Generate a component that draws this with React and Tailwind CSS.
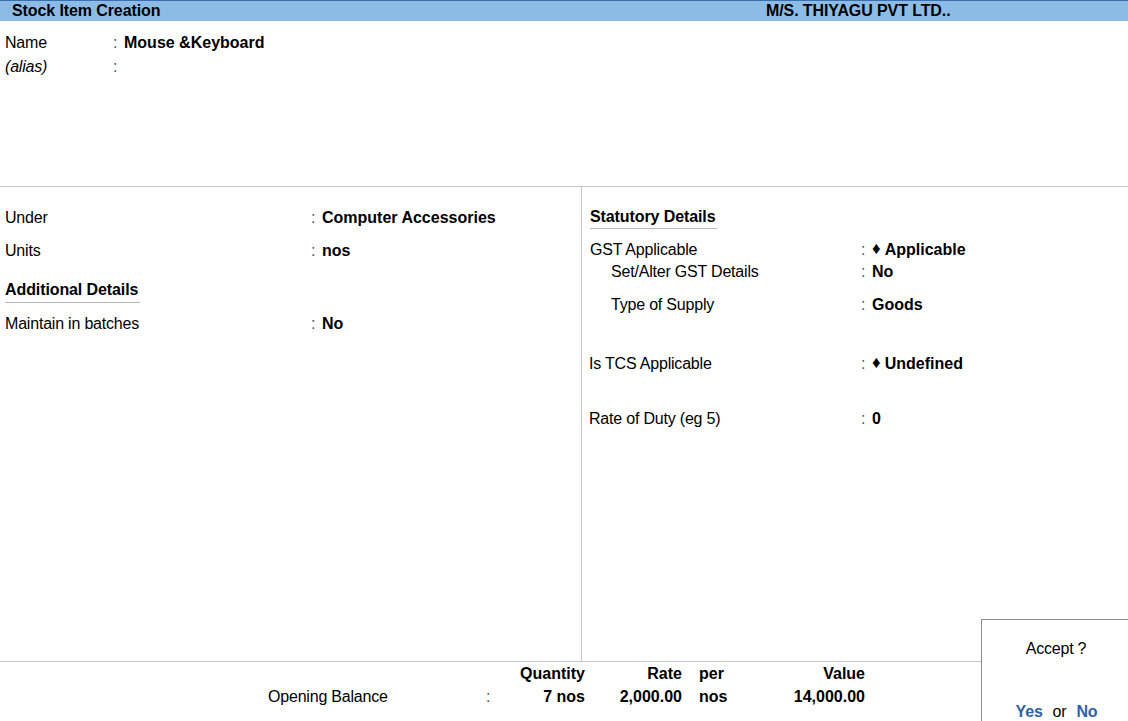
import React from "react";

const Row = ({ label, value, labelW, className = "", labelClass = "" }) => (
  <div className={`flex items-center h-[24px] ${className}`}>
    <div className={`shrink-0 ${labelClass}`} style={{ width: labelW }}>
      {label}
    </div>
    <span className="text-gray-600 w-[11px]">:</span>
    <span className="font-bold tracking-normal">{value}</span>
  </div>
);

const Diamond = () => <span className="text-[17px] mr-[4px] relative -top-[1px]">♦</span>;

const App = () => {
  return (
    <div
      className="relative w-[1128px] h-[721px] overflow-hidden bg-white text-black text-[16px] tracking-[-0.2px]"
      style={{ fontFamily: '"Liberation Sans", Arial, sans-serif' }}
    >
      {/* title bar */}
      <div className="flex items-center h-[21px] bg-[#8cbce5] border-t border-[#3b6fae] font-bold tracking-[-0.1px]">
        <div className="pl-[12px] w-[766px]">Stock Item Creation</div>
        <div>M/S. THIYAGU PVT LTD..</div>
      </div>

      {/* name block */}
      <div className="h-[165px] pt-[10px] pl-[5px]">
        <div className="flex items-center h-[24px]">
          <div className="w-[108px]">Name</div>
          <span className="text-gray-600 w-[11px]">:</span>
          <span className="font-bold tracking-normal">Mouse &amp;Keyboard</span>
        </div>
        <div className="flex items-center h-[23px]">
          <div className="w-[108px] italic">(alias)</div>
          <span className="text-gray-600">:</span>
        </div>
      </div>

      {/* middle */}
      <div className="flex h-[476px] border-y border-[#c8c8c8]">
        <div className="w-[582px] border-r border-[#c8c8c8] pl-[5px] pt-[19px]">
          <Row label="Under" value="Computer Accessories" labelW={306} />
          <Row label="Units" value="nos" labelW={306} className="mt-[9px]" />
          <div className="mt-[16px] h-[24px] flex items-center">
            <span className="font-bold tracking-[-0.1px] border-b border-[#b8b8b8] pb-[1px] pr-[2px] leading-[22px]">
              Additional Details
            </span>
          </div>
          <Row label="Maintain in batches" value="No" labelW={306} className="mt-[9px]" />
        </div>

        <div className="flex-1 pl-[8px] pt-[18px]">
          <div className="h-[24px] flex items-center">
            <span className="font-bold tracking-[-0.1px] border-b border-[#b8b8b8] pr-[2px] leading-[22px]">
              Statutory Details
            </span>
          </div>
          <Row
            label="GST Applicable"
            value={
              <>
                <Diamond />
                Applicable
              </>
            }
            labelW={271}
            className="mt-[9px]"
          />
          <Row label="Set/Alter GST Details" value="No" labelW={250} className="-mt-[2px] pl-[21px]" />
          <Row label="Type of Supply" value="Goods" labelW={250} className="mt-[9px] pl-[21px]" />
          <Row
            label="Is TCS Applicable"
            value={
              <>
                <Diamond />
                Undefined
              </>
            }
            labelW={272}
            className="mt-[35px] -ml-px"
          />
          <Row label="Rate of Duty (eg 5)" value="0" labelW={272} className="mt-[31px] -ml-px" />
        </div>
      </div>

      {/* opening balance */}
      <div className="h-[59px]">
        <div className="flex items-center h-[23px] font-bold tracking-normal">
          <div className="w-[495px]" />
          <div className="w-[90px] text-right">Quantity</div>
          <div className="w-[97px] text-right">Rate</div>
          <div className="w-[42px] text-right">per</div>
          <div className="w-[141px] text-right">Value</div>
        </div>
        <div className="flex items-center h-[23px]">
          <div className="w-[268px]" />
          <div className="w-[218px]">Opening Balance</div>
          <div className="w-[9px] text-gray-600">:</div>
          <div className="w-[90px] text-right font-bold tracking-normal">7 nos</div>
          <div className="w-[97px] text-right font-bold tracking-normal">2,000.00</div>
          <div className="pl-[17px] w-[42px] font-bold tracking-normal">nos</div>
          <div className="w-[141px] text-right font-bold tracking-normal">14,000.00</div>
        </div>
      </div>

      {/* accept box */}
      <div className="absolute left-[981px] top-[619px] w-[148px] h-[103px] bg-white border border-[#8a8a8a] flex flex-col items-center">
        <div className="mt-[17px] pl-[2px]">Accept ?</div>
        <div className="mt-[39px] flex items-center gap-[10px] pl-[3px]">
          <span className="font-bold text-[#2f62a6]">Yes</span>
          <span>or</span>
          <span className="font-bold text-[#2f62a6]">No</span>
        </div>
      </div>
    </div>
  );
};

export default App;
